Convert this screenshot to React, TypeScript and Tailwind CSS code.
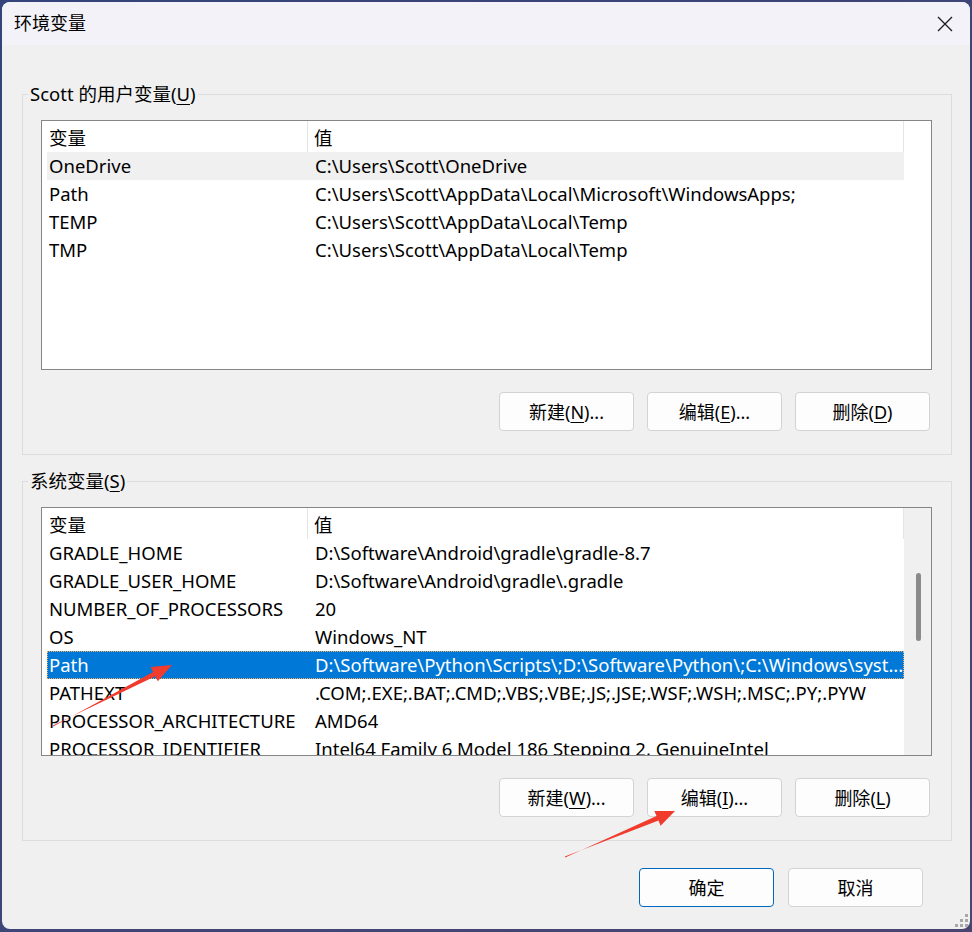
import React from "react";

type Row = { name: string; value: string };

const userVars: Row[] = [
  { name: "OneDrive", value: String.raw`C:\Users\Scott\OneDrive` },
  { name: "Path", value: String.raw`C:\Users\Scott\AppData\Local\Microsoft\WindowsApps;` },
  { name: "TEMP", value: String.raw`C:\Users\Scott\AppData\Local\Temp` },
  { name: "TMP", value: String.raw`C:\Users\Scott\AppData\Local\Temp` },
];

const systemVars: Row[] = [
  { name: "GRADLE_HOME", value: String.raw`D:\Software\Android\gradle\gradle-8.7` },
  { name: "GRADLE_USER_HOME", value: String.raw`D:\Software\Android\gradle\.gradle` },
  { name: "NUMBER_OF_PROCESSORS", value: "20" },
  { name: "OS", value: "Windows_NT" },
  { name: "Path", value: String.raw`D:\Software\Python\Scripts\;D:\Software\Python\;C:\Windows\syst...` },
  { name: "PATHEXT", value: ".COM;.EXE;.BAT;.CMD;.VBS;.VBE;.JS;.JSE;.WSF;.WSH;.MSC;.PY;.PYW" },
  { name: "PROCESSOR_ARCHITECTURE", value: "AMD64" },
  { name: "PROCESSOR_IDENTIFIER", value: "Intel64 Family 6 Model 186 Stepping 2, GenuineIntel" },
];

function Key({ k }: { k: string }) {
  return <span className="underline decoration-1 underline-offset-[3px]">{k}</span>;
}

function Button({ label, k, dots, primary }: { label: string; k?: string; dots?: boolean; primary?: boolean }) {
  return (
    <button
      className={
        "flex h-[39px] w-[135px] items-center justify-center rounded-[4px] border bg-[#fdfdfd] text-[18px] leading-none text-black " +
        (primary ? "border-[#0067c0]" : "border-[#d3d3d3]")
      }
    >
      {label}
      {k && (
        <>
          (<Key k={k} />)
        </>
      )}
      {dots && "..."}
    </button>
  );
}

function VarList({ rows, selected, focused, scroll, height }: { rows: Row[]; selected?: number; focused?: number; scroll?: boolean; height: string }) {
  return (
    <div className={"flex overflow-hidden border border-[#868686] bg-white text-[18.5px] " + height}>
      <div className="w-[862px] shrink-0 pl-[5px]">
        <div className="flex h-[31px] w-[857px] items-center">
          <div className="h-full w-[261px] shrink-0 border-r border-[#e5e5e5] pl-[2px] pt-[2px] leading-[29px]">变量</div>
          <div className="h-full flex-1 border-r border-[#e5e5e5] pl-[6px] pt-[2px] leading-[29px]">值</div>
        </div>
        {rows.map((r, i) => {
          const sel = i === selected;
          const foc = i === focused;
          return (
            <div
              key={r.name + i}
              className={
                "flex h-[28px] w-[857px] items-center whitespace-nowrap " +
                (sel ? "border border-dotted border-[#f0b060] bg-[#0078d7] text-white " : "") +
                (foc ? "bg-[#f0f0f0] " : "")
              }
            >
              <div className={"w-[261px] shrink-0 overflow-hidden " + (sel ? "pl-[1px]" : "pl-[2px]")}>{r.name}</div>
              <div className={"flex-1 overflow-hidden " + (sel ? "pl-[6px]" : "pl-[7px]")}>{r.value}</div>
            </div>
          );
        })}
      </div>
      {scroll && (
        <div className="flex flex-1 justify-center bg-[#f0f0f0] pt-[65px]">
          <div className="ml-[2px] h-[68px] w-[5px] rounded-full bg-[#8b8b8b]" />
        </div>
      )}
    </div>
  );
}

function Group({ title, k, children }: { title: string; k: string; children: React.ReactNode }) {
  return (
    <fieldset className="w-[930px] border border-[#dcdcdc]">
      <legend className="ml-[5px] px-[2px] text-[18.5px] leading-[24px]">
        {title}(<Key k={k} />)
      </legend>
      <div className="pl-[18px] pr-[19px] pt-[14px] pb-[23px]">{children}</div>
    </fieldset>
  );
}

export default function App() {
  return (
    <div
      className="relative h-[932px] w-[972px] bg-gradient-to-br from-[#34437a] via-[#3e4577] to-[#4a4470] pl-[2px] pt-[2px] text-black"
      style={{ fontFamily: '"Noto Sans", "Noto Sans CJK SC", sans-serif' }}
    >
      <div className="relative flex h-[927px] w-[968px] flex-col overflow-hidden rounded-[8px] bg-[#f0f0f0]">
        <div className="flex h-[43px] shrink-0 items-center justify-between bg-[#f3f2f8] pl-[12px] pr-[17px] text-[18px]">
          <span>环境变量</span>
          <svg width="16" height="16" viewBox="0 0 16 16" className="text-[#1b1b1b]">
            <path d="M1 1 L15 15 M15 1 L1 15" stroke="currentColor" strokeWidth="1.3" />
          </svg>
        </div>

        <div className="flex flex-col pl-[20px] pt-[37px] text-[18px]">
          <Group title="Scott 的用户变量" k="U">
            <VarList rows={userVars} focused={0} height="h-[250px]" />
            <div className="mt-[22px] flex justify-end gap-[13px] pr-[2px]">
              <Button label="新建" k="N" dots />
              <Button label="编辑" k="E" dots />
              <Button label="删除" k="D" />
            </div>
          </Group>

          <div className="mt-[14px]">
            <Group title="系统变量" k="S">
              <VarList rows={systemVars} selected={4} scroll height="h-[249px]" />
              <div className="mt-[22px] flex justify-end gap-[13px] pr-[2px]">
                <Button label="新建" k="W" dots />
                <Button label="编辑" k="I" dots />
                <Button label="删除" k="L" />
              </div>
            </Group>
          </div>

          <div className="mt-[27px] flex w-[930px] justify-end gap-[14px] pr-[29px]">
            <Button label="确定" primary />
            <Button label="取消" />
          </div>
        </div>

        <svg width="16" height="14" viewBox="0 0 16 14" className="absolute bottom-[1px] right-[1px] text-[#a8a8a8]">
          <rect x="12" y="0" width="3" height="3" fill="currentColor" />
          <rect x="7" y="5" width="3" height="3" fill="currentColor" />
          <rect x="12" y="5" width="3" height="3" fill="currentColor" />
          <rect x="2" y="10" width="3" height="3" fill="currentColor" />
          <rect x="7" y="10" width="3" height="3" fill="currentColor" />
          <rect x="12" y="10" width="3" height="3" fill="currentColor" />
        </svg>
      </div>

      {/* annotation arrows drawn over the screenshot */}
      <svg className="pointer-events-none absolute inset-0" width="972" height="932" viewBox="0 0 972 932">
        <polygon
          fill="#f03b2d"
          points="53.2,726.4 153.1,671.9 150.6,667 172,665 157.8,681.2 155.3,676.3 52.8,725.6"
        />
        <polygon
          fill="#f03b2d"
          points="565.2,857.4 656.5,816 654.4,810.9 675,811 660.6,825.7 658.5,820.6 564.8,856.6"
        />
      </svg>
    </div>
  );
}
